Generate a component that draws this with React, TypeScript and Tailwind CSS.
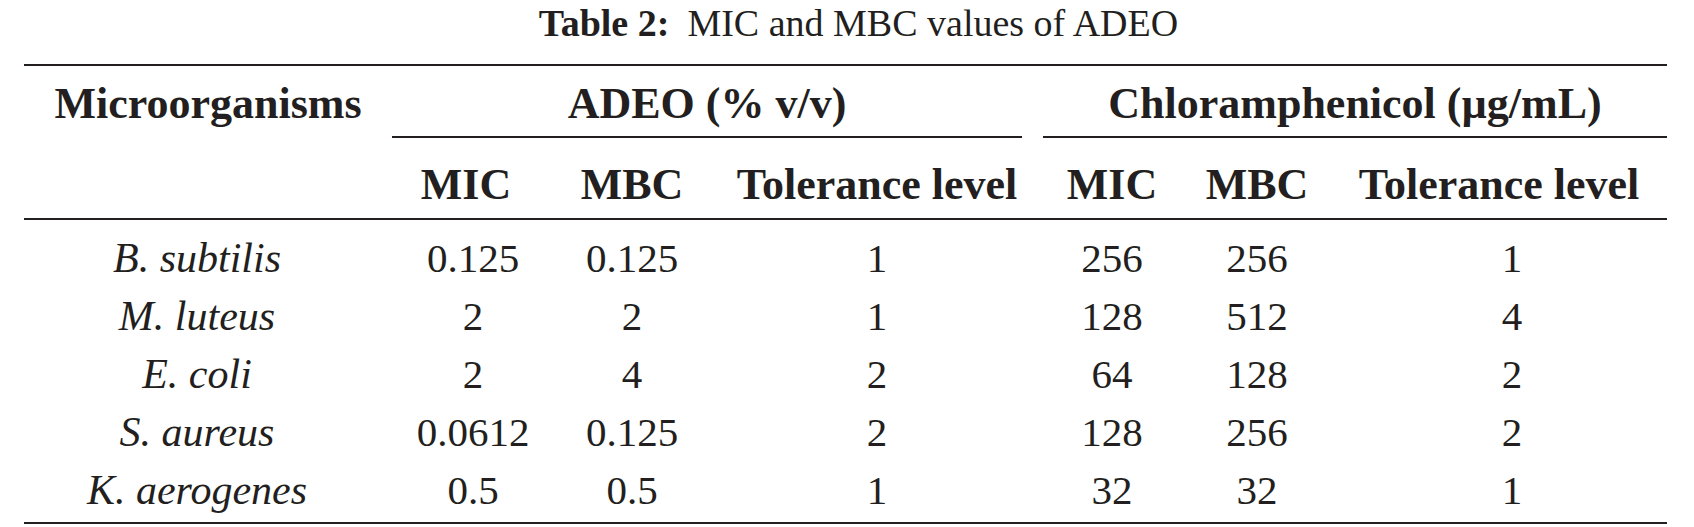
const rows = [
  { name: 'B. subtilis', adeo: ['0.125', '0.125', '1'], chl: ['256', '256', '1'] },
  { name: 'M. luteus', adeo: ['2', '2', '1'], chl: ['128', '512', '4'] },
  { name: 'E. coli', adeo: ['2', '4', '2'], chl: ['64', '128', '2'] },
  { name: 'S. aureus', adeo: ['0.0612', '0.125', '2'], chl: ['128', '256', '2'] },
  { name: 'K. aerogenes', adeo: ['0.5', '0.5', '1'], chl: ['32', '32', '1'] },
];

const cols = 'grid grid-cols-[368px_148px_184px_306px_164px_126px_347px]';

// nudges so numbers sit where the reference has them
const adeoPad = ['pl-[14px]', '', ''];
const chlPad = ['', '', 'pl-[37px]'];

export default function App() {
  return (
    <div className="min-h-screen bg-white text-[#231f20] font-['Liberation_Serif','Times_New_Roman',serif]">
      <div className="ml-[24px] w-[1643px]">
        <div className="h-[64px] pt-[4px] pl-[26px] text-center text-[38px] leading-[38px] whitespace-nowrap">
          <span className="font-bold">Table 2:</span>
          <span className="ml-[18px]">MIC and MBC values of ADEO</span>
        </div>

        <div className="border-y-2 border-[#231f20]">
          <div className={`${cols} text-[44px] leading-[44px] font-bold whitespace-nowrap`}>
            <div className="h-[72px] pt-[16px] text-center">Microorganisms</div>
            <div className="col-span-3 h-[72px] pt-[16px] mr-[8px] border-b-2 border-[#231f20] text-center">
              ADEO (% v/v)
            </div>
            <div className="col-span-3 h-[72px] pt-[16px] ml-[13px] border-b-2 border-[#231f20] text-center">
              Chloramphenicol (µg/mL)
            </div>

            <div className="h-[80px]"></div>
            <div className="h-[80px] pt-[25px] text-center">MIC</div>
            <div className="h-[80px] pt-[25px] text-center">MBC</div>
            <div className="h-[80px] pt-[25px] text-center">Tolerance level</div>
            <div className="h-[80px] pt-[25px] text-center">MIC</div>
            <div className="h-[80px] pt-[25px] text-center">MBC</div>
            <div className="h-[80px] pt-[25px] pl-[11px] text-center">Tolerance level</div>
          </div>
        </div>

        <div className="pt-[9px] pb-[3px] border-b-2 border-[#231f20]">
          {rows.map((r) => (
            <div key={r.name} className={`${cols} h-[58px] text-[41px] leading-[58px] text-center`}>
              <div className="pr-[22px] italic text-[42px]">{r.name}</div>
              {r.adeo.map((v, i) => (
                <div key={'a' + i} className={adeoPad[i]}>
                  {v}
                </div>
              ))}
              {r.chl.map((v, i) => (
                <div key={'c' + i} className={chlPad[i]}>
                  {v}
                </div>
              ))}
            </div>
          ))}
        </div>
      </div>
    </div>
  );
}
